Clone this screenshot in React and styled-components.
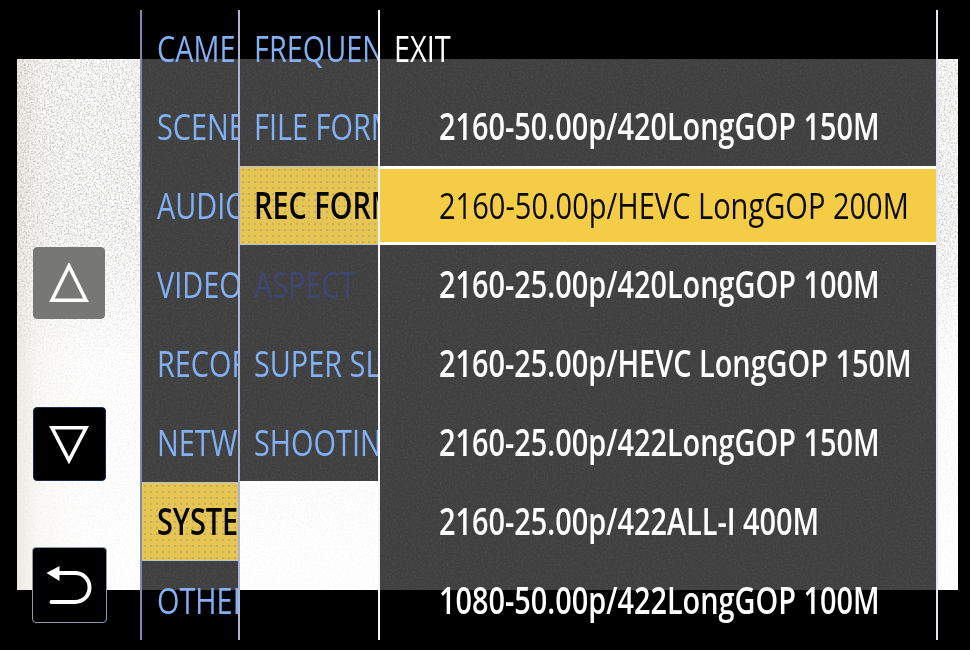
import React from 'react'
import styled, { createGlobalStyle } from 'styled-components'

const GlobalStyle = createGlobalStyle`
  html, body {
    margin: 0;
    background: #000;
  }
`

const Screen = styled.div`
  position: relative;
  width: 970px;
  height: 650px;
  overflow: hidden;
  background: #000;
  display: grid;
  grid-template-columns: 140px 98px 140px 558px 2px;
  padding-top: 10px;
  box-sizing: border-box;
  font-family: "Open Sans", "Noto Sans", sans-serif;
`

const Paper = styled.div`
  position: absolute;
  left: 17px;
  top: 59px;
  width: 941px;
  height: 531px;
  background: linear-gradient(90deg, #eeece6 0, #fbfaf7 22px, #fff 60px);
`

const GrainLayer = styled.svg`
  position: absolute;
  left: 0;
  top: ${p => p.$top || 0}px;
  width: 100%;
  height: ${p => (p.$height ? `${p.$height}px` : '100%')};
  opacity: ${p => p.$strength};
  ${p => p.$fade && 'mask-image: linear-gradient(180deg, #000 0, #000 170px, rgba(0,0,0,.25) 300px, rgba(0,0,0,.1) 100%);'}
`

const Side = styled.div`
  position: relative;
  padding: 237px 0 0 32px;
`

const SideStack = styled.div`
  width: 74px;
  display: flex;
  flex-direction: column;
  align-items: center;
`

const SideButton = styled.div`
  flex: none;
  width: ${p => p.$w}px;
  height: ${p => p.$h}px;
  box-sizing: border-box;
  margin-top: ${p => p.$top || 0}px;
  border-radius: 4px;
  display: flex;
  align-items: center;
  justify-content: center;
  background: ${p => (p.$dim ? '#777775' : '#000')};
  border: 1px solid ${p => (p.$outline ? '#8d9bb5' : p.$dim ? '#777775' : '#1b2a55')};
`

const Column = styled.div`
  position: relative;
  height: 630px;
  box-sizing: border-box;
  border-left: 2px solid ${p => p.$line};
  background: linear-gradient(180deg,
    transparent 49px,
    #3f3f3f 49px,
    #3f3f3f ${p => p.$darkEnd}px,
    transparent ${p => p.$darkEnd}px);
`

const LastEdge = styled.div`
  position: relative;
  height: 630px;
  background: #e4e6f4;
`

const Rows = styled.div`
  position: relative;
  display: grid;
  grid-template-rows: 77px repeat(7, 79px);
  height: 630px;
  overflow: hidden;
`

const Row = styled.div`
  display: flex;
  align-items: center;
  box-sizing: border-box;
  white-space: nowrap;
  overflow: hidden;
  padding-left: ${p => p.$pad}px;
  padding-bottom: 3px;
  font-size: 37px;
  font-weight: 500;
  color: ${p => (p.$disabled ? '#3f4672' : '#82b0f5')};
`

const CurrentRow = styled(Row)`
  color: #050505;
  font-weight: 600;
  background-color: #e6c552;
  background-image: radial-gradient(rgba(150, 150, 120, .45) 1px, transparent 1.4px);
  background-size: 6px 6px;
  border-top: 1px solid #b9c2d6;
  border-bottom: 1px solid #b9c2d6;
`

const ValueRow = styled(Row)`
  color: #fff;
  font-weight: ${p => (p.$exit ? 400 : 600)};
`

const SelectedRow = styled(Row)`
  color: #0a0a0a;
  font-weight: 400;
  background: #f4cc46;
  border-top: 3px solid #fff;
  border-bottom: 3px solid #fff;
`

const Label = styled.span`
  flex: none;
  display: inline-block;
  transform: scaleX(${p => p.$squeeze || 0.78});
  transform-origin: left center;
`

const Triangle = ({ down }) => (
  <svg width="40" height="40" viewBox="0 0 40 40">
    <path
      d={down ? 'M3 3.8 H37 L20 36.5 Z' : 'M20 3 L37 37.2 H3 Z'}
      fill="none"
      stroke="#fff"
      strokeWidth="3.6"
    />
  </svg>
)

const BackArrow = () => (
  <svg width="48" height="42" viewBox="0 0 48 42">
    <path d="M1.5 9 L14.5 2 V17 Z" fill="#fff" />
    <path
      d="M13 9 H30 C38 9 44.5 15 44.5 23.5 C44.5 32 38 38 30 38 H6.5"
      fill="none"
      stroke="#fff"
      strokeWidth="4"
      strokeLinecap="round"
    />
  </svg>
)

const Grain = ({ top, height, strength, fade }) => (
  <GrainLayer $top={top} $height={height} $strength={strength} $fade={fade}>
    <rect width="100%" height="100%" filter="url(#grain)" />
  </GrainLayer>
)

const mainMenu = ['CAME', 'SCENE', 'AUDIO', 'VIDEO', 'RECOR', 'NETW', 'SYSTE', 'OTHER']
const subMenu = ['FREQUEN', 'FILE FORM', 'REC FORM', 'ASPECT', 'SUPER SL', 'SHOOTIN']
const formats = [
  '2160-50.00p/420LongGOP 150M',
  '2160-50.00p/HEVC LongGOP 200M',
  '2160-25.00p/420LongGOP 100M',
  '2160-25.00p/HEVC LongGOP 150M',
  '2160-25.00p/422LongGOP 150M',
  '2160-25.00p/422ALL-I 400M',
  '1080-50.00p/422LongGOP 100M'
]

export default function App() {
  return (
    <Screen>
      <GlobalStyle />
      <Paper>
        <GrainLayer $strength={.8} $fade>
          <defs>
            <filter id="grain" x="0" y="0" width="100%" height="100%">
              <feTurbulence type="fractalNoise" baseFrequency="0.55" numOctaves="3" seed="4" />
              <feColorMatrix values="0 0 0 0 .35  0 0 0 0 .35  0 0 0 0 .33  1.8 0 0 0 -.72" />
            </filter>
          </defs>
          <rect width="100%" height="100%" filter="url(#grain)" />
        </GrainLayer>
      </Paper>
      <Side>
        <SideStack>
          <SideButton $dim $w={72} $h={72}><Triangle /></SideButton>
          <SideButton $top={88} $w={73} $h={74}><Triangle down /></SideButton>
          <SideButton $top={66} $w={75} $h={76} $outline><BackArrow /></SideButton>
        </SideStack>
      </Side>
      <Column $line="#7d8bb0" $darkEnd={580}>
        <Grain top={49} height={531} strength={.15} />
        <Rows>
          {mainMenu.map(label =>
            label === 'SYSTE'
              ? <CurrentRow key={label} $pad={15}><Label>{label}</Label></CurrentRow>
              : <Row key={label} $pad={15}><Label>{label}</Label></Row>
          )}
        </Rows>
      </Column>
      <Column $line="#a9b4d6" $darkEnd={471}>
        <Grain top={49} height={422} strength={.15} />
        <Rows>
          {subMenu.map(label =>
            label === 'REC FORM'
              ? <CurrentRow key={label} $pad={14}><Label>{label}</Label></CurrentRow>
              : <Row key={label} $pad={14} $disabled={label === 'ASPECT'}><Label>{label}</Label></Row>
          )}
        </Rows>
      </Column>
      <Column $line="#f4f4fa" $darkEnd={580}>
        <Grain top={49} height={531} strength={.15} />
        <Rows>
          <ValueRow $exit $pad={14}><Label>EXIT</Label></ValueRow>
          {formats.map((label, i) =>
            i === 1
              ? <SelectedRow key={label} $pad={59}><Label $squeeze={0.785}>{label}</Label></SelectedRow>
              : <ValueRow key={label} $pad={59}><Label>{label}</Label></ValueRow>
          )}
        </Rows>
      </Column>
      <LastEdge />
    </Screen>
  )
}
